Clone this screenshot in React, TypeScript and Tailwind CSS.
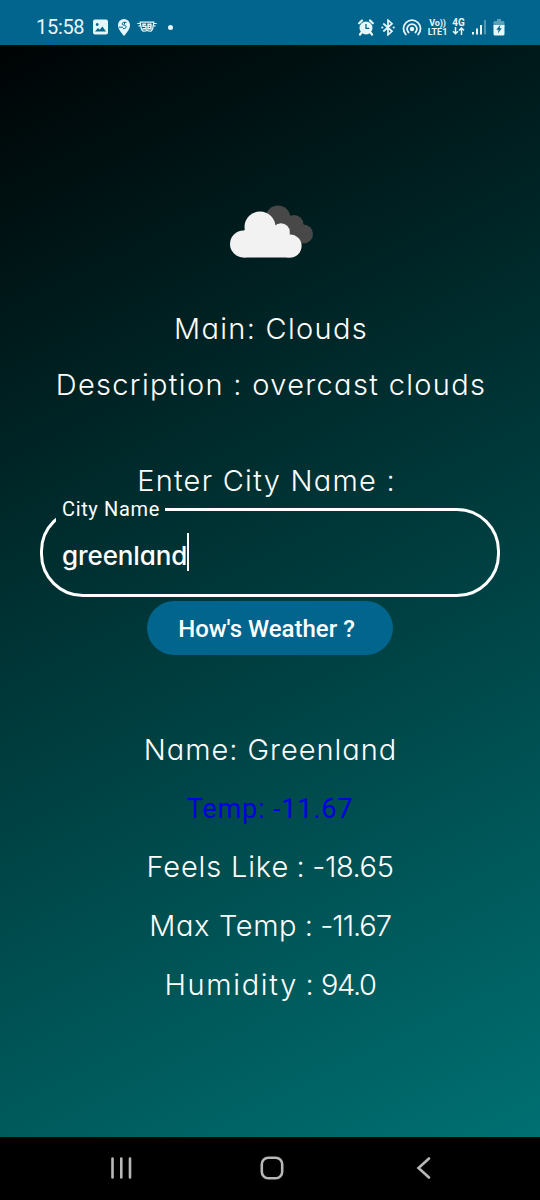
import React from 'react';

function Line({ children, className }: { children: React.ReactNode; className: string }) {
  return (
    <div
      className={`flex shrink-0 items-center justify-center whitespace-pre font-['Inter','Noto_Sans',sans-serif] text-[29px] leading-[58px] font-[350] text-white [font-feature-settings:'cv11','ss03'] ${className}`}
    >
      {children}
    </div>
  );
}

function StatusBar() {
  return (
    <div className="flex h-[45px] shrink-0 items-center bg-[#01658d] pt-[9px] pl-9 text-[#e6f7fb]">
      <span className="w-[57px] font-['Roboto',sans-serif] text-[20px] leading-none tracking-[-0.3px]">15:58</span>
      <svg className="h-4 w-[15px]" viewBox="0 0 15 16">
        <path
          fill="currentColor"
          fillRule="evenodd"
          d="M2 .5h11a2 2 0 0 1 2 2v11a2 2 0 0 1-2 2H2a2 2 0 0 1-2-2v-11a2 2 0 0 1 2-2ZM2 12.5h11l-3.6-5-2.7 3.3-1.7-1.8ZM4.2 4.1a1.4 1.4 0 1 0 .01 0Z"
        />
      </svg>
      <svg className="ml-[10px] h-[17px] w-3" viewBox="0 0 12 17">
        <path fill="currentColor" d="M6 0a6 6 0 0 1 6 6c0 4-3 7.500-6 11C3 13.500 0 10 0 6a6 6 0 0 1 6-6Z" />
        <path fill="none" stroke="#01658d" strokeWidth="1" d="M8.500 3.500C6 2.700 4 3.500 4.200 5.200c.5 1.200 4 .8 4 2.600 0 1.400-1.400 1.900-3.200 1.800M1 8.200h4M6.500 3v2.500" />
      </svg>
      <svg className="ml-[7px] h-3 w-5" viewBox="0 0 20 12">
        <path fill="none" stroke="currentColor" strokeWidth="1.200" d="M.3 2.500h3M16.700 2.500h3M1.500 4.800h2.500M16 4.800h2.500M3.200 1.200h13.600l-1.200 7-1.600 2-3-.3-1-1.200-1 1.200-3 .3-1.600-2Z" />
        <path fill="none" stroke="currentColor" strokeWidth="1.400" d="M9 3.200H6v2h3v2.500H5.500M11 8V3.200h3v4.500h-3M11 5.400h3" />
      </svg>
      <span className="ml-[11px] h-[5px] w-[5px] rounded-full bg-current" />

      <svg className="ml-[185px] h-[17px] w-4" viewBox="0 0 16 17">
        <circle cx="8" cy="9" r="6.500" fill="currentColor" />
        <path fill="none" stroke="currentColor" strokeWidth="2.200" strokeLinecap="round" d="M1.200 4.300 4 1.500M14.800 4.300 12 1.500M3.500 13.500 2 15.500M12.500 13.500l1.500 2" />
        <path fill="none" stroke="#01658d" strokeWidth="1.300" d="M8 5v4.300h3.300" />
      </svg>
      <svg className="ml-[7px] h-[17px] w-[14px]" viewBox="0 0 14 17" fill="none" stroke="currentColor" strokeWidth="1.700">
        <path d="m2.300 4.500 8.700 7.800-4 3.500V1.200l4 3.500-8.700 7.800" />
        <path strokeWidth="2.200" strokeLinecap="round" d="M1.300 8.500h.01M12.700 8.500h.01" />
      </svg>
      <svg className="ml-[7px] h-[17px] w-5" viewBox="0 0 20 17" fill="none" stroke="currentColor" strokeWidth="1.800" strokeLinecap="round">
        <circle cx="10" cy="10" r="2.200" fill="currentColor" stroke="none" />
        <path d="M6.600 13.500a4.900 4.900 0 1 1 6.800 0M3.800 15.500a8.500 8.500 0 1 1 12.400 0" />
      </svg>
      <div className="-mt-px ml-[5px] flex w-[21px] flex-col items-center font-['Roboto',sans-serif] text-[9px] font-bold">
        <div className="h-[10px] leading-[10px] tracking-[-0.2px]">Vo))</div>
        <div className="h-[8px] leading-[9px]">LTE1</div>
      </div>
      <div className="-mt-px ml-[4px] w-[13px] text-center font-['Roboto',sans-serif] text-[10px] leading-[9px] font-bold">
        <div>4G</div>
        <svg className="h-[8px] w-[13px]" viewBox="0 0 13 8" fill="none" stroke="currentColor" strokeWidth="1.500">
          <path d="M3.500 0v6.500M1 4.200l2.500 2.500L6 4.200M9.500 8V1M7 3.500 9.500 1 12 3.500" />
        </svg>
      </div>
      <svg className="ml-[7px] h-4 w-[14px]" viewBox="0 0 14 16" fill="currentColor">
        <path d="M0 13h2v2.500H0zM4 9.500h2v6H4zM8 6h2v9.500H8z" />
        <path opacity=".35" d="M12 1h2v14.500h-2z" />
      </svg>
      <svg className="ml-[7px] h-[17px] w-3" viewBox="0 0 12 17">
        <path fill="currentColor" opacity=".4" d="M4 0h4v2h2a1.500 1.500 0 0 1 1.500 1.500V8H.500V3.500A1.500 1.500 0 0 1 2 2h2Z" />
        <path fill="currentColor" d="M.500 6h11v9a1.500 1.500 0 0 1-1.500 1.500H2A1.500 1.500 0 0 1 .500 15Z" />
        <path fill="#01658d" d="M7.500 5.500 3.300 10.800h2.400L4.800 14.500l4-5.200H6.500Z" />
      </svg>
    </div>
  );
}

function CloudIcon() {
  return (
    <svg className="mt-[160px] ml-[3px] h-[54px] w-[84px] shrink-0" viewBox="0 0 84 54">
      <g fill="#484848">
        <circle cx="48" cy="13" r="12.500" />
        <circle cx="64" cy="19.500" r="9.500" />
        <circle cx="73.500" cy="29" r="9.500" />
        <path d="M40 20 55 5l22 24-6 9.500H50Z" />
      </g>
      <g fill="#f2f2f2">
        <circle cx="13.500" cy="39" r="13.500" />
        <circle cx="30" cy="22" r="15.500" />
        <circle cx="51" cy="27" r="8.800" />
        <circle cx="60" cy="41" r="11.600" />
        <path d="M13.500 26 30 12l15 16h14.500l1 24.500h-47Z" />
      </g>
    </svg>
  );
}

function NavBar() {
  return (
    <div className="flex h-[63px] shrink-0 items-center bg-black pb-[2px] pl-[111px] text-[#b8b8b8]">
      <svg className="h-6 w-[21px]" viewBox="0 0 21 24" fill="none" stroke="currentColor" strokeWidth="2.600" strokeLinecap="round">
        <path d="M1.500 2.500v19M10.300 2.500v19M19 2.500v19" />
      </svg>
      <svg className="ml-[128px] h-6 w-6" viewBox="0 0 24 24" fill="none" stroke="currentColor" strokeWidth="2.600">
        <rect x="1.800" y="1.800" width="20.400" height="20.400" rx="6.500" />
      </svg>
      <svg className="ml-[132px] h-6 w-[15px]" viewBox="0 0 15 24" fill="none" stroke="currentColor" strokeWidth="2.600" strokeLinecap="round">
        <path d="m13 2.500-10.500 9.500 10.500 9.500" />
      </svg>
    </div>
  );
}

export default function App() {
  return (
    <div className="flex h-[1200px] w-[540px] flex-col overflow-hidden">
      <StatusBar />
      <main className="flex flex-1 flex-col items-center bg-[linear-gradient(153.700deg,#000304,#007072)]">
        <CloudIcon />
        <Line className="mt-[41px] h-[58px] pl-[2px] tracking-[1.300px]">Main: Clouds</Line>
        <Line className="h-[54px] pl-[2px] tracking-[1.330px]">Description : overcast clouds</Line>
        <Line className="mt-[40px] h-[58px] pr-[7px] tracking-[1.250px]">Enter City Name :</Line>
        <fieldset className="-mt-[13px] h-[100px] w-[460px] shrink-0 rounded-[43px] border-[3px] border-white pl-[13px]">
          <legend className="h-[25px] w-[109px] pl-[6px] font-['Roboto',sans-serif] text-[20px] leading-[25px] tracking-[0.650px] whitespace-nowrap text-white">
            City Name
          </legend>
          <div className="flex h-[60px] items-center pl-[6px]">
            <span className="w-[125px] pt-[8px] font-['Inter','Noto_Sans',sans-serif] text-[26px] leading-none font-medium tracking-[-0.100px] whitespace-nowrap text-white [font-feature-settings:'cv11']">
              greenland
            </span>
            <span className="h-[38px] w-[2px] bg-white" />
          </div>
        </fieldset>
        <button className="mt-[4px] h-[54px] w-[246px] shrink-0 rounded-full bg-[#01658d] pt-[2px] pr-[7px] font-['Roboto',sans-serif] text-[24px] leading-none font-medium whitespace-nowrap text-white">
          How's Weather ?
        </button>
        <Line className="mt-[66px] h-[58px] pl-[1px] tracking-[0.980px]">Name: Greenland</Line>
        <div className="flex h-[59px] shrink-0 items-center pt-[2px] font-['Roboto',sans-serif] text-[27px] tracking-[0.850px] text-[#0000e0]">
          Temp: -11.67
        </div>
        <Line className="h-[58px]">
          <span className="tracking-[0.850px]">Feels Like</span>
          <span className="[word-spacing:-0.700px]"> : </span>
          <span className="tracking-[-0.400px]">-18.65</span>
        </Line>
        <Line className="h-[59px]">
          <span className="tracking-[0.650px]">Max Temp</span>
          <span className="[word-spacing:-0.700px]"> : </span>
          <span className="tracking-[-1.100px]">-11.67</span>
        </Line>
        <Line className="h-[59px]">
          <span className="tracking-[1.650px]">Humidity</span>
          <span className="[word-spacing:-0.700px]"> : </span>
          <span className="tracking-[-1.400px]">94.0</span>
        </Line>
      </main>
      <NavBar />
    </div>
  );
}
